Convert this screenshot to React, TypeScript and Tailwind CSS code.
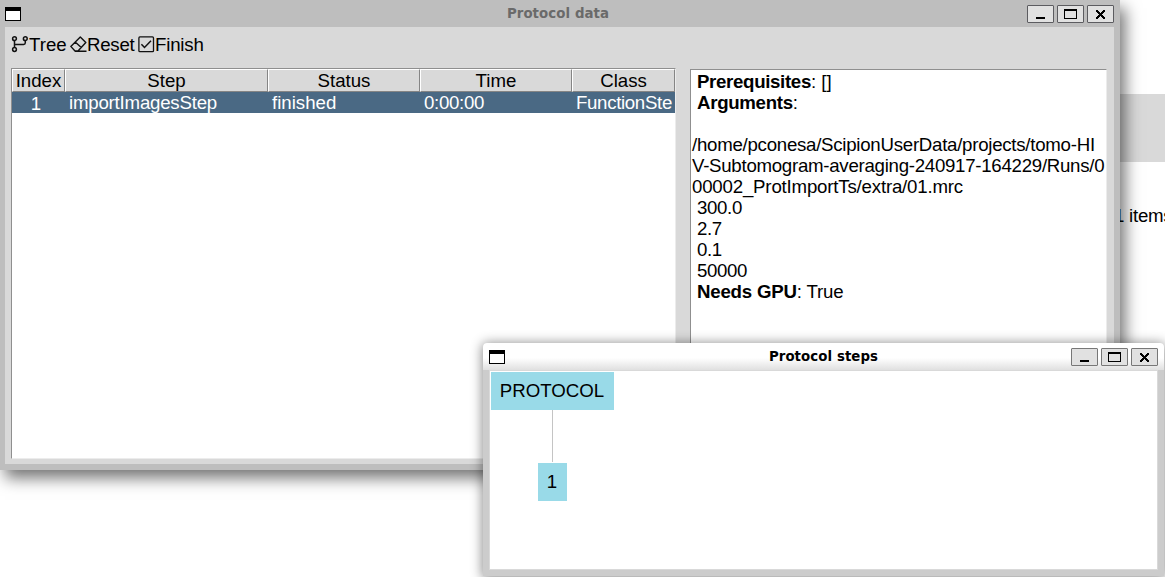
import React from "react";

function WindowGlyph() {
  return (
    <svg width="16" height="14" viewBox="0 0 16 14" shapeRendering="crispEdges" className="block">
      <rect width="16" height="14" fill="#000" />
      <rect x="1" y="4" width="14" height="9" fill="#fff" />
    </svg>
  );
}

function TitleButton({ kind, edge }: { kind: "min" | "max" | "close"; edge: string }) {
  return (
    <div className={`flex h-[18px] w-[27px] rounded-[1px] border bg-[#e1e1e1] ${edge}`}>
      <svg width="25" height="16" viewBox="0 0 25 16" shapeRendering="crispEdges" className="block">
        {kind === "min" && <rect x="8" y="11" width="9" height="2" fill="#000" />}
        {kind === "max" && <path d="M6 3h13v10H6zM7 5v7h11V5z" fillRule="evenodd" fill="#000" />}
        {kind === "close" && (
          <path
            d="M8 4h2v1h-2zM15 4h2v1h-2zM8 5h3v1h-3zM14 5h3v1h-3zM9 6h3v1h-3zM13 6h3v1h-3zM10 7h5v1h-5zM11 8h3v1h-3zM10 9h5v1h-5zM9 10h3v1h-3zM13 10h3v1h-3zM8 11h3v1h-3zM14 11h3v1h-3zM8 12h2v1h-2zM15 12h2v1h-2z"
            fill="#000"
          />
        )}
      </svg>
    </div>
  );
}

function TitleButtons({ edge }: { edge: string }) {
  return (
    <div className="flex gap-[3px]">
      <TitleButton kind="min" edge={edge} />
      <TitleButton kind="max" edge={edge} />
      <TitleButton kind="close" edge={edge} />
    </div>
  );
}

function BranchIcon() {
  return (
    <svg width="17" height="17" viewBox="0 0 17 17" fill="none" stroke="#111" strokeWidth="1.5" className="block shrink-0">
      <circle cx="3.5" cy="2.7" r="1.9" />
      <circle cx="3.5" cy="13.5" r="1.9" />
      <circle cx="14.3" cy="2.7" r="1.9" />
      <path d="M3.5 4.6v7M14.3 4.6v2.2q0 1.7-1.7 1.7H3.5" />
    </svg>
  );
}

function EraserIcon() {
  return (
    <svg width="17" height="17" viewBox="0 0 17 17" fill="none" stroke="#111" strokeWidth="1.4" strokeLinejoin="round" className="block shrink-0">
      <path d="M10.3 1 15.8 6.6 8 15H5L.8 10.4zM5.2 6l6.3 5.8M5 15.2h11.5" />
    </svg>
  );
}

function CheckIcon() {
  return (
    <svg width="17" height="17" viewBox="0 0 17 17" fill="none" stroke="#111" strokeWidth="1.3" className="block shrink-0">
      <rect x=".9" y=".9" width="14.6" height="14.8" rx="1" />
      <path d="m3.4 8.2 3.1 3.3L13 4.8" strokeWidth="1.5" />
    </svg>
  );
}

const columns = [
  { title: "Index", value: "1", width: "w-[53px]", align: "text-center pr-[5px] pt-px" },
  { title: "Step", value: "importImagesStep", width: "w-[203px]", align: "pl-1 tracking-[-0.21px]" },
  { title: "Status", value: "finished", width: "w-[152px]", align: "pl-1" },
  { title: "Time", value: "0:00:00", width: "w-[152px]", align: "pl-1 tracking-[-0.3px]" },
  { title: "Class", value: "FunctionSte", width: "w-[103px]", align: "pl-1 tracking-[-0.33px]" },
];

function StepsTable() {
  return (
    <div className="h-[391px] w-[665px] border border-b-[#ececec] border-l-[#8f8f8f] border-r-[#ececec] border-t-[#8f8f8f] bg-white">
      <div className="flex h-[23px] bg-[#d9d9d9]">
        {columns.map((c) => (
          <div
            key={c.title}
            className={`${c.width} h-[23px] shrink-0 border border-b-[#858585] border-l-white border-r-[#858585] border-t-white text-center leading-[22px]`}
          >
            {c.title}
          </div>
        ))}
      </div>
      <div className="flex h-[21px] bg-[#4a6984] leading-[21px] text-white">
        {columns.map((c) => (
          <div key={c.title} className={`${c.width} h-[21px] shrink-0 overflow-hidden whitespace-nowrap ${c.align}`}>
            {c.value}
          </div>
        ))}
      </div>
    </div>
  );
}

function DetailsPanel() {
  return (
    <div className="h-[390px] w-[417px] whitespace-nowrap border border-b-[#ececec] border-l-[#8f8f8f] border-r-[#ececec] border-t-[#8f8f8f] bg-white pl-px pt-px leading-[21px]">
      <p className="pl-[5px]"><b className="tracking-[-0.33px]">Prerequisites</b>: []</p>
      <p className="pl-[5px]"><b className="tracking-[-0.3px]">Arguments</b>:</p>
      <p className="mt-[21px] tracking-[-0.26px]">/home/pconesa/ScipionUserData/projects/tomo-HI</p>
      <p className="tracking-[-0.27px]">V-Subtomogram-averaging-240917-164229/Runs/0</p>
      <p className="tracking-[-0.19px]">00002_ProtImportTs/extra/01.mrc</p>
      <p className="pl-[5px] tracking-[-0.35px]">300.0</p>
      <p className="pl-[5px] tracking-[-0.35px]">2.7</p>
      <p className="pl-[5px] tracking-[-0.35px]">0.1</p>
      <p className="pl-[5px] tracking-[-0.38px]">50000</p>
      <p className="pl-[5px] tracking-[-0.2px]"><b>Needs GPU</b>: True</p>
    </div>
  );
}

function DataWindow() {
  return (
    <section className="absolute left-0 top-0 h-[470px] w-[1120px] bg-[#bebebe] pl-[5px] pr-[6px] shadow-[5px_8px_15px_0px_rgba(0,0,0,0.55)]">
      <header className="flex h-[27px] items-center justify-between">
        <WindowGlyph />
        <h1 className="ml-[68px] font-['DejaVu_Sans',sans-serif] text-[13.33px] font-bold tracking-[0.08px] text-[#6a6a6a]">Protocol data</h1>
        <TitleButtons edge="border-[#5c5c60]" />
      </header>
      <main className="h-[437px] bg-[#d9d9d9] pl-[6px] pt-[9px]">
        <nav className="flex h-[17px] items-center">
          <BranchIcon />
          <span className="ml-px w-[41px]">Tree</span>
          <EraserIcon />
          <span className="w-[51px] tracking-[-0.25px]">Reset</span>
          <CheckIcon />
          <span className="tracking-[-0.2px]">Finish</span>
        </nav>
        <div className="mt-[15px] flex items-start gap-[14px]">
          <StepsTable />
          <div className="mt-px"><DetailsPanel /></div>
        </div>
      </main>
    </section>
  );
}

function StepsWindow() {
  return (
    <section className="absolute left-[483px] top-[343px] h-[233px] w-[681px] rounded-t-[4px] bg-[#cccccc] shadow-[0_1px_12px_1px_rgba(0,0,0,0.45)]">
      <header className="flex h-[27px] items-center justify-between rounded-t-[4px] bg-[linear-gradient(#fff_0,#fff_55%,#e0e0e0_100%)] px-[6px]">
        <WindowGlyph />
        <h1 className="ml-[71px] font-['DejaVu_Sans',sans-serif] text-[13.33px] font-bold tracking-[0.08px] text-black">Protocol steps</h1>
        <TitleButtons edge="border-[#777]" />
      </header>
      <main className="relative ml-[6px] h-[200px] w-[669px] border border-[#d9d9d9] bg-white">
        <div className="absolute left-px top-px flex h-[38px] w-[123px] items-center justify-center bg-[#99dae8] pb-[2px] pr-px">PROTOCOL</div>
        <div className="absolute left-[62px] top-[39px] h-[52px] w-px bg-[#c4c4c4]" />
        <div className="absolute left-[48px] top-[92px] flex h-[38px] w-[29px] items-center justify-center bg-[#99dae8] pb-[2px] pr-px">1</div>
      </main>
    </section>
  );
}

export default function App() {
  return (
    <div className="relative h-[577px] w-[1165px] overflow-hidden bg-white font-['Liberation_Sans',Arial,sans-serif] text-[18.67px] leading-[21px] text-black">
      <div className="flex flex-col items-end">
        <div className="mt-[94px] h-[68px] w-[60px] bg-[#d9d9d9]" />
        <div className="mt-[43px] w-[51px] whitespace-nowrap tracking-[-0.25px]">1 items</div>
      </div>
      <DataWindow />
      <StepsWindow />
    </div>
  );
}
